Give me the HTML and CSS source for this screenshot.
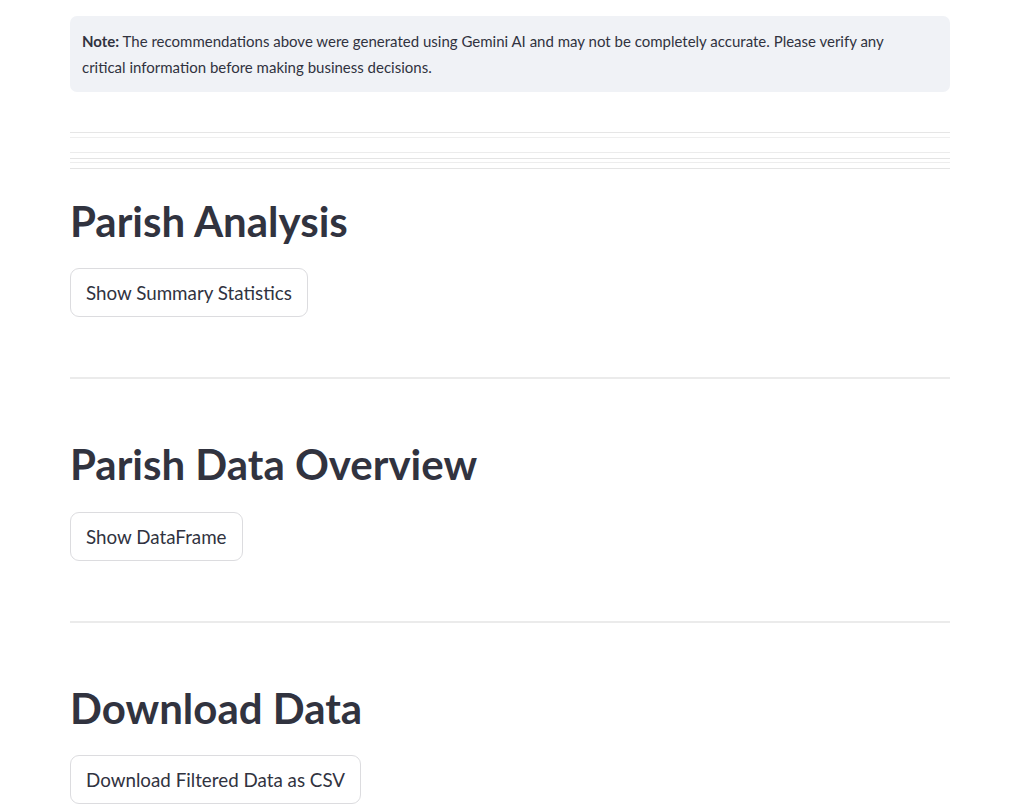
FILE: index.html
```html
<!DOCTYPE html>
<html lang="en">
  <head>
    <meta charset="UTF-8" />
    <meta name="viewport" content="width=device-width, initial-scale=1.0" />
    <title>Parish Dashboard</title>
    <link rel="stylesheet" href="styles.css">
  </head>
  <body>
    <div class="main">
      <div class="note">
        <p><strong>Note:</strong> The recommendations above were generated using Gemini AI and may not be completely accurate. Please verify any critical information before making business decisions.</p>
      </div>

      <div class="rules">
        <div class="rule rule-a"></div>
        <div class="rule rule-b"></div>
        <div class="rule rule-c"></div>
        <div class="rule rule-d"></div>
        <div class="rule rule-e"></div>
        <div class="rule rule-f"></div>
      </div>

      <section class="section">
        <h2>Parish Analysis</h2>
        <button class="btn">Show Summary Statistics</button>
      </section>

      <hr class="divider" />

      <section class="section">
        <h2>Parish Data Overview</h2>
        <button class="btn">Show DataFrame</button>
      </section>

      <hr class="divider" />

      <section class="section">
        <h2>Download Data</h2>
        <button class="btn">Download Filtered Data as CSV</button>
      </section>
    </div>
  </body>
</html>
```
FILE: styles.css
```css
body {
  font-family: "Lato", "Noto Sans", sans-serif;
  margin: 0;
  background-color: #fff;
  color: #31333f;
}
.main {
  width: 880px;
  padding: 16px 0 40px 70px;
}
.note {
  background-color: #f0f2f6;
  border-radius: 7px;
  padding: 12px 24px 12px 12px;
  font-size: 15px;
  line-height: 26px;
}
.note p {
  margin: 0;
}
.note strong {
  font-weight: 700;
}
.rules {
  padding-top: 40px;
}
.rule {
  height: 1px;
  background-color: #e6e6e6;
}
.rule-b {
  margin-top: 4px;
  background-color: #efefef;
}
.rule-c {
  margin-top: 14px;
  background-color: #ececec;
}
.rule-d {
  margin-top: 5px;
  background-color: #e4e4e4;
}
.rule-e {
  margin-top: 3px;
  background-color: #ededed;
}
.rule-f {
  margin-top: 5px;
  background-color: #e4e4e4;
}
.section {
  padding-top: 27px;
}
.section h2 {
  margin: 0 0 22px;
  font-size: 42px;
  font-weight: 700;
  line-height: 1.2;
  color: #31333f;
}
.btn {
  box-sizing: border-box;
  height: 49px;
  padding: 0 15px;
  border: 1px solid #dcdcdf;
  border-radius: 9px;
  background-color: #fff;
  color: #31333f;
  font-family: inherit;
  font-size: 18.8px;
  cursor: pointer;
}
.btn:hover {
  border-color: #ff4b4b;
  color: #ff4b4b;
}
.divider {
  border: none;
  height: 2px;
  background-color: #ebebeb;
  margin: 60px 0 0;
}
.divider + .section {
  padding-top: 60px;
}
```
